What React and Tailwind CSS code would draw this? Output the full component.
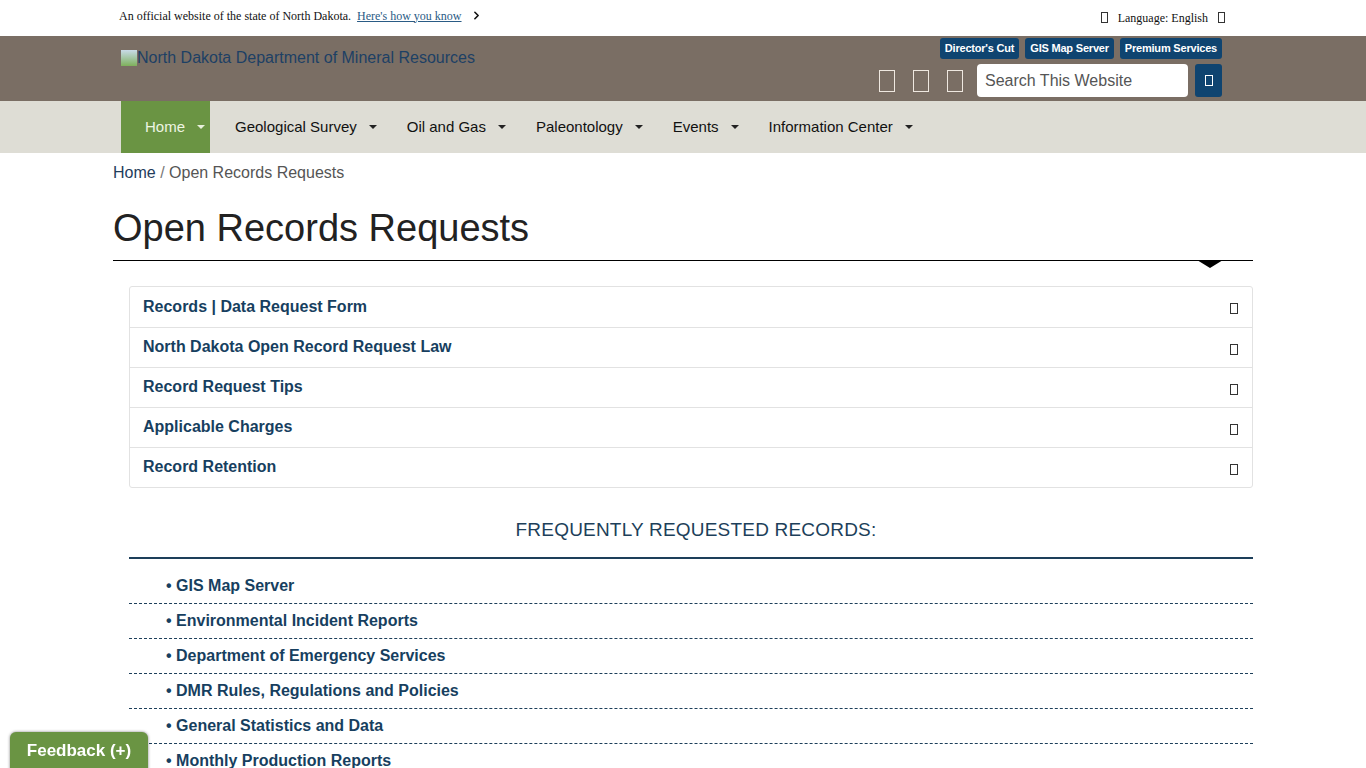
import { ChevronRight } from "lucide-react";

const navItems = [
  "Geological Survey",
  "Oil and Gas",
  "Paleontology",
  "Events",
  "Information Center",
];

const accordion = [
  "Records | Data Request Form",
  "North Dakota Open Record Request Law",
  "Record Request Tips",
  "Applicable Charges",
  "Record Retention",
];

const records = [
  "GIS Map Server",
  "Environmental Incident Reports",
  "Department of Emergency Services",
  "DMR Rules, Regulations and Policies",
  "General Statistics and Data",
  "Monthly Production Reports",
];

// missing icon-font glyph box
const Tofu = ({ className = "" }) => (
  <span className={"inline-block border " + className} />
);

const Caret = ({ light }) => (
  <span
    className={
      "ml-[12px] inline-block border-x-[4px] border-t-[4px] border-x-transparent " +
      (light ? "border-t-[#e8f0dc]" : "border-t-[#222]")
    }
  />
);

const App = () => {
  return (
    <div className="relative min-h-[768px] bg-white font-['Liberation_Sans',Arial,sans-serif]">
      {/* official site bar */}
      <div className="flex h-[36px] items-center justify-between pb-[5px] pl-[119px] pr-[141px] font-['Liberation_Serif',serif] text-[12px] text-[#111]">
        <div className="flex items-center">
          <span>An official website of the state of North Dakota.</span>
          <span className="ml-[6px] text-[#2a5b85] underline">Here's how you know</span>
          <ChevronRight className="ml-[8px] h-[13px] w-[13px]" strokeWidth={3} />
        </div>
        <div className="mt-[4px] flex items-center">
          <Tofu className="h-[11px] w-[7px] border-[#333]" />
          <span className="ml-[10px]">Language: English</span>
          <Tofu className="ml-[10px] h-[11px] w-[7px] border-[#333]" />
        </div>
      </div>

      {/* header */}
      <div className="h-[65px] bg-[#7a6e64]">
        <div className="ml-[121px] flex w-[1101px] justify-between">
          <div className="mt-[12px] flex h-[20px] items-center text-[16px] text-[#1d4064]">
            <span className="inline-block h-[16px] w-[16px] bg-gradient-to-b from-[#c9dbe8] to-[#7fb05a]" />
            North Dakota Department of Mineral Resources
          </div>
          <div className="flex flex-col items-end">
            <div className="mt-[2px] flex gap-[6px]">
              {["Director's Cut", "GIS Map Server", "Premium Services"].map((b) => (
                <span
                  key={b}
                  className="rounded-[3px] bg-[#0f4470] px-[5px] py-[3px] text-[11px] font-bold leading-[15px] tracking-[-0.2px] text-white"
                >
                  {b}
                </span>
              ))}
            </div>
            <div className="mt-[5px] flex items-center">
              <Tofu className="h-[22px] w-[16px] border-[#efe8e0]" />
              <Tofu className="ml-[18px] h-[22px] w-[16px] border-[#efe8e0]" />
              <Tofu className="ml-[18px] h-[22px] w-[16px] border-[#efe8e0]" />
              <div className="ml-[14px] flex h-[33px] w-[211px] items-center rounded-[4px] bg-white px-[8px] text-[16px] text-[#555]">
                Search This Website
              </div>
              <div className="ml-[7px] flex h-[33px] w-[27px] items-center justify-center rounded-[3px] bg-[#0f4470]">
                <Tofu className="h-[11px] w-[8px] border-white" />
              </div>
            </div>
          </div>
        </div>
      </div>

      {/* nav */}
      <div className="h-[52px] bg-[#deddd5]">
        <div className="ml-[121px] flex h-full items-center text-[15px] text-[#111]">
          <div className="flex h-full items-center bg-[#6a9443] pl-[24px] pr-[5px] text-[#eef5e2]">
            Home
            <Caret light />
          </div>
          {navItems.map((n) => (
            <div key={n} className="flex h-full items-center pl-[25px] pr-[5px]">
              {n}
              <Caret />
            </div>
          ))}
        </div>
      </div>

      {/* content */}
      <div className="mx-auto w-[1140px]">
        <div className="mt-[10px] text-[16px] leading-[20px]">
          <span className="text-[#1f3d5c]">Home</span>
          <span className="text-[#777]"> / </span>
          <span className="text-[#555]">Open Records Requests</span>
        </div>
        <h1 className="mt-[20px] text-[38px] leading-[50px] text-[#222]">Open Records Requests</h1>
        <div className="relative mt-[7px] h-[1px] bg-black">
          <span className="absolute right-[30px] top-0 border-x-[13px] border-t-[8px] border-x-transparent border-t-black" />
        </div>

        <div className="ml-[16px] mt-[25px] rounded-[3px] border border-[#e2e2e2]">
          {accordion.map((a, i) => (
            <div
              key={a}
              className={
                "flex h-[40px] items-center justify-between pl-[13px] pr-[14px] text-[16px] font-bold text-[#173f5f] " +
                (i > 0 ? "border-t border-[#e2e2e2]" : "")
              }
            >
              <span className="-mt-[1px]">{a}</span>
              <Tofu className="mt-[3px] h-[11px] w-[8px] border-[#333]" />
            </div>
          ))}
        </div>

        <div className="ml-[16px]">
          <div className="mt-[30px] pl-[10px] text-center text-[19px] leading-[24px] tracking-[0.2px] text-[#1d3f5a]">
            FREQUENTLY REQUESTED RECORDS:
          </div>
          <div className="mt-[15px] h-[2px] bg-[#1d3f5a]" />
          <ul className="mt-[10px]">
            {records.map((r) => (
              <li
                key={r}
                className="flex h-[35px] items-center border-b border-dashed border-[#1d3f5a] pl-[37px] text-[16px] font-bold text-[#173f5f]"
              >
                • {r}
              </li>
            ))}
          </ul>
        </div>
      </div>

      {/* feedback */}
      <div className="fixed bottom-[-4px] left-[10px] flex h-[40px] w-[138px] items-start justify-center rounded-t-[6px] bg-[#6a9443] pt-[6px] text-[17px] font-bold text-white shadow-[0_0_3px_rgba(0,0,0,0.5)]">
        Feedback (+)
      </div>
    </div>
  );
};

export default App;
